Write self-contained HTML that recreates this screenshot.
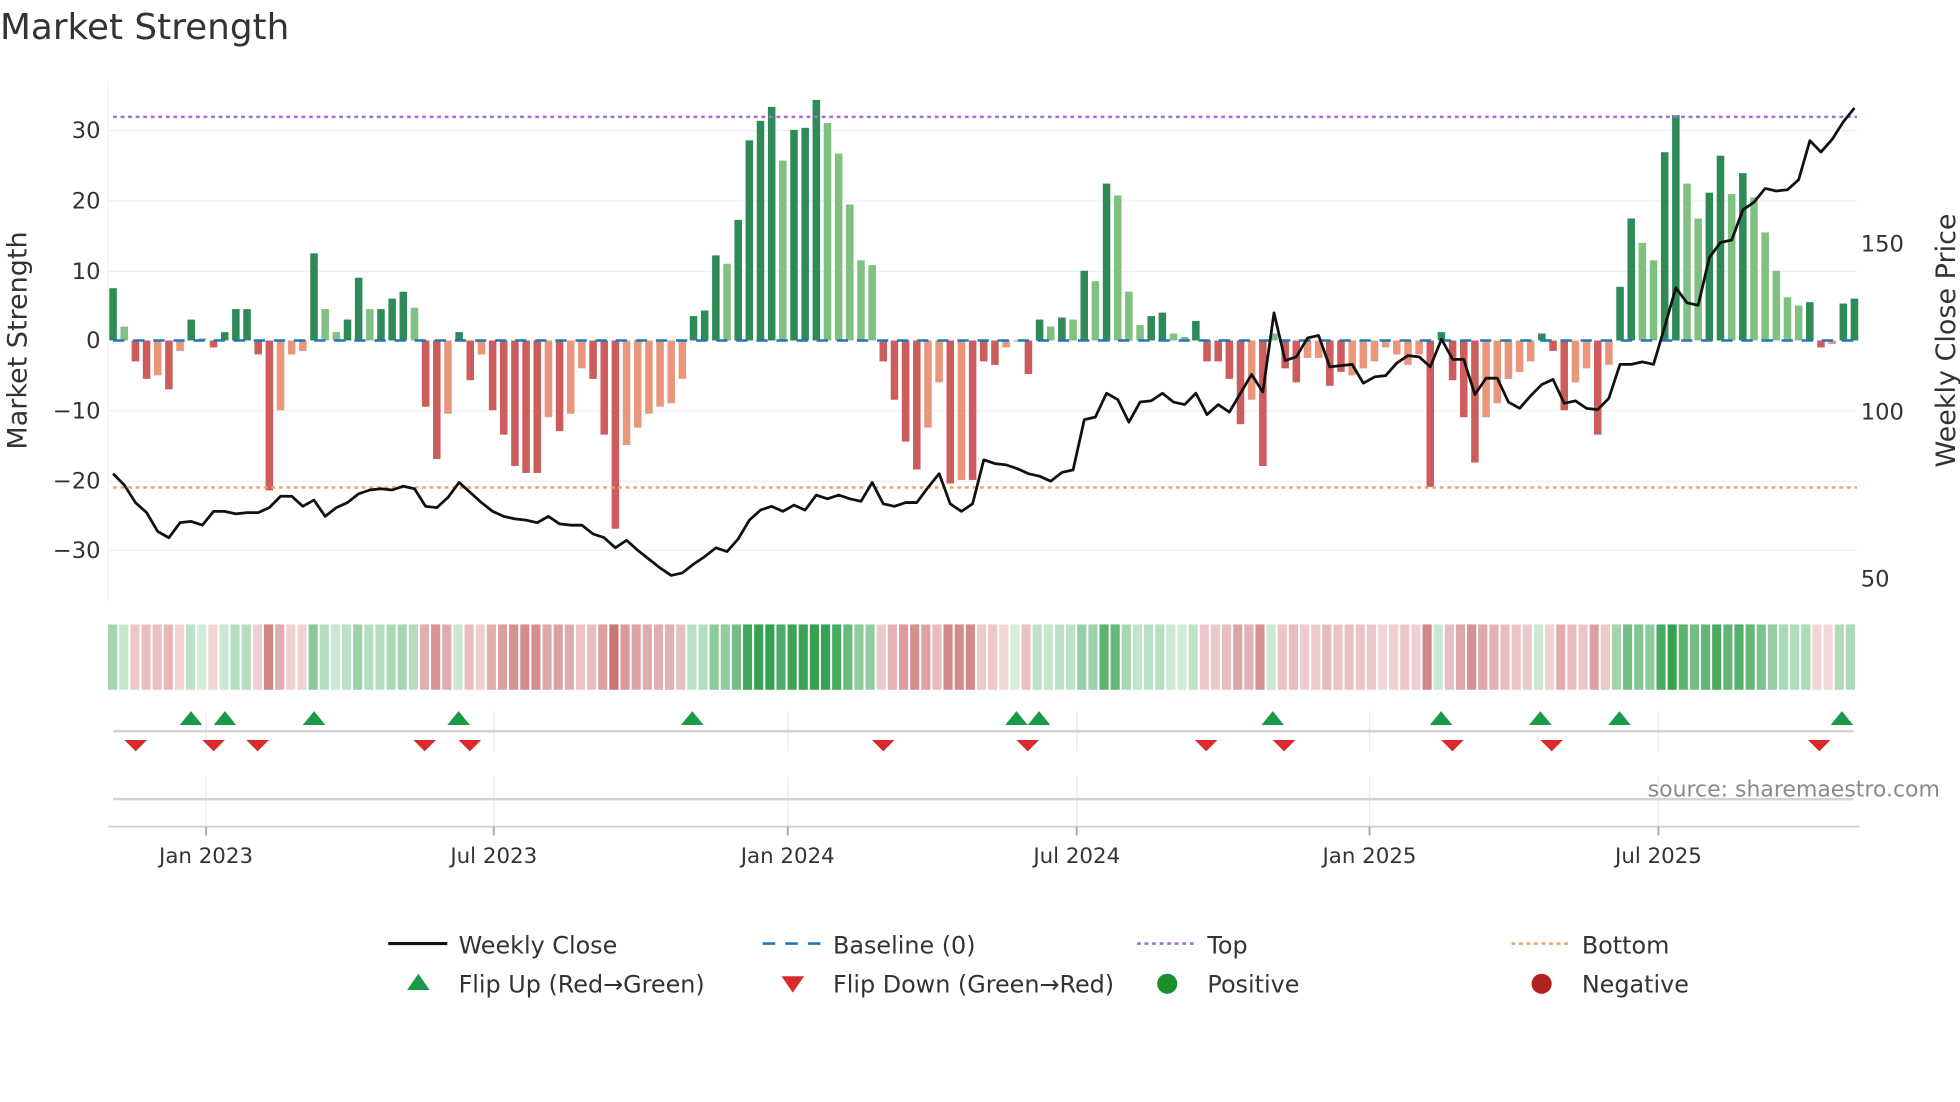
<!DOCTYPE html>
<html><head><meta charset="utf-8"><style>
html,body{margin:0;padding:0;background:#fff;width:1960px;height:1102px;overflow:hidden}
svg{display:block}
text{font-family:"DejaVu Sans","Liberation Sans",sans-serif}
</style></head><body>
<svg id="s" width="1960" height="1102" viewBox="0 0 1560 877.1" xmlns="http://www.w3.org/2000/svg">
<rect width="1560" height="878" fill="#fff"/>
<text x="0" y="31" font-size="28.5" fill="#333">Market Strength</text>
<g id="grid" stroke="#eef0f4" stroke-width="1"></g>
<line x1="86" y1="65" x2="86" y2="478" stroke="#eceef2"/>
<g id="bars"></g>
<line x1="90" y1="271" x2="1478" y2="271" stroke="#1f77b4" stroke-width="2" stroke-dasharray="9,7"/>
<line x1="90" y1="93" x2="1478" y2="93" stroke="#a66cdc" stroke-width="2" stroke-dasharray="3,3"/>
<line x1="90" y1="388" x2="1478" y2="388" stroke="#f2a36a" stroke-width="2" stroke-dasharray="3,3"/>
<polyline id="price" fill="none" stroke="#111" stroke-width="2.2" stroke-linejoin="round"/>
<g font-size="18" fill="#333" text-anchor="end">
<text x="80" y="110">30</text><text x="80" y="166">20</text><text x="80" y="222">10</text><text x="80" y="277">0</text>
<text x="80" y="333">−10</text><text x="80" y="389">−20</text><text x="80" y="444">−30</text>
</g>
<g font-size="18" fill="#333">
<text x="1481" y="200">150</text><text x="1481" y="334">100</text><text x="1481" y="467">50</text>
</g>
<text transform="translate(21,271) rotate(-90)" font-size="21.5" fill="#333" text-anchor="middle">Market Strength</text>
<text transform="translate(1556,271) rotate(-90)" font-size="21.5" fill="#333" text-anchor="middle">Weekly Close Price</text>
<g id="heat"></g>
<g stroke="#e8eaee">
<line x1="164" y1="566" x2="164" y2="598"/><line x1="393" y1="566" x2="393" y2="598"/><line x1="627" y1="566" x2="627" y2="598"/><line x1="857" y1="566" x2="857" y2="598"/><line x1="1090" y1="566" x2="1090" y2="598"/><line x1="1320" y1="566" x2="1320" y2="598"/>
<line x1="164" y1="618" x2="164" y2="658"/><line x1="393" y1="618" x2="393" y2="658"/><line x1="627" y1="618" x2="627" y2="658"/><line x1="857" y1="618" x2="857" y2="658"/><line x1="1090" y1="618" x2="1090" y2="658"/><line x1="1320" y1="618" x2="1320" y2="658"/>
</g>
<line x1="90" y1="582" x2="1475" y2="582" stroke="#d3d3d3" stroke-width="2"/>
<g id="flips"></g>
<line x1="90" y1="636" x2="1475" y2="636" stroke="#d3d3d3" stroke-width="2"/>
<line x1="86" y1="658" x2="1480" y2="658" stroke="#d3d3d3" stroke-width="1.5"/>
<g stroke="#aaa" stroke-width="1.5"><line x1="164" y1="658" x2="164" y2="665"/><line x1="393" y1="658" x2="393" y2="665"/><line x1="627" y1="658" x2="627" y2="665"/><line x1="857" y1="658" x2="857" y2="665"/><line x1="1090" y1="658" x2="1090" y2="665"/><line x1="1320" y1="658" x2="1320" y2="665"/></g>
<text x="1544" y="634" font-size="17.5" fill="#8a8a8a" text-anchor="end">source: sharemaestro.com</text>
<g font-size="17" fill="#333" text-anchor="middle">
<text x="164" y="687">Jan 2023</text><text x="393" y="687">Jul 2023</text><text x="627" y="687">Jan 2024</text><text x="857" y="687">Jul 2024</text><text x="1090" y="687">Jan 2025</text><text x="1320" y="687">Jul 2025</text>
</g>
<g font-size="19" fill="#333">
<line x1="309" y1="751" x2="356" y2="751" stroke="#111" stroke-width="2.5"/><text x="365" y="759">Weekly Close</text>
<line x1="607" y1="751" x2="654" y2="751" stroke="#1f77b4" stroke-width="2" stroke-dasharray="10,8"/><text x="663" y="759">Baseline (0)</text>
<line x1="905" y1="751" x2="952" y2="751" stroke="#a66cdc" stroke-width="2" stroke-dasharray="3,3"/><text x="961" y="759">Top</text>
<line x1="1203" y1="751" x2="1250" y2="751" stroke="#f2a36a" stroke-width="2" stroke-dasharray="3,3"/><text x="1259" y="759">Bottom</text>
<polygon points="333,775 342,788 324,788" fill="#1a9a48"/><text x="365" y="790">Flip Up (Red→Green)</text>
<polygon points="622,777 640,777 631,790" fill="#d92b2b"/><text x="663" y="790">Flip Down (Green→Red)</text>
<circle cx="929" cy="783" r="8" fill="#1a8f2e"/><text x="961" y="790">Positive</text>
<circle cx="1227" cy="783" r="8" fill="#b22222"/><text x="1259" y="790">Negative</text>
</g>
</svg>
<script>
var NS="http://www.w3.org/2000/svg";
function el(t,a,p){var e=document.createElementNS(NS,t);for(var k in a)e.setAttribute(k,a[k]);document.getElementById(p).appendChild(e);return e;}
[104,160,216,327,383,438].forEach(function(y){el("line",{x1:86,x2:1478,y1:y,y2:y},"grid");});
var V=[[7.5,1],[2,0],[-3,1],[-5.5,1],[-5,0],[-7,1],[-1.5,0],[3,1],[0.3,0],[-1,1],[1.2,1],[4.5,1],[4.5,1],[-2,1],[-21.5,1],[-10,0],[-2,0],[-1.5,0],[12.5,1],[4.5,0],[1.2,0],[3,1],[9,1],[4.5,0],[4.5,1],[6,1],[7,1],[4.7,0],[-9.5,1],[-17,1],[-10.5,0],[1.2,1],[-5.7,1],[-2,0],[-10,1],[-13.5,1],[-18,1],[-19,1],[-19,1],[-11,0],[-13,1],[-10.5,0],[-4,0],[-5.5,1],[-13.5,1],[-27,1],[-15,0],[-12.5,0],[-10.5,0],[-9.5,0],[-9,0],[-5.5,0],[3.5,1],[4.3,1],[12.2,1],[11,0],[17.3,1],[28.7,1],[31.5,1],[33.5,1],[25.8,0],[30.2,1],[30.5,1],[34.5,1],[31.2,0],[26.8,0],[19.5,0],[11.5,0],[10.8,0],[-3,1],[-8.5,1],[-14.5,1],[-18.5,1],[-12.5,0],[-6,0],[-20.5,1],[-20,0],[-20,1],[-3,1],[-3.5,1],[-1,0],[0,0],[-4.8,1],[3,1],[2,0],[3.3,1],[3,0],[10,1],[8.5,0],[22.5,1],[20.8,0],[7,0],[2.2,0],[3.5,1],[4,1],[1,0],[0.5,0],[2.8,1],[-3,1],[-3,1],[-5.5,1],[-12,1],[-8.5,0],[-18,1],[1,0],[-4,1],[-6,1],[-2.5,0],[-2.5,0],[-6.5,1],[-4.5,1],[-5,0],[-4,0],[-3,0],[-1,0],[-2,0],[-3.5,0],[-2,0],[-21,1],[1.2,1],[-5.7,1],[-11,1],[-17.5,1],[-11,0],[-9,0],[-5.5,0],[-4.5,0],[-3,0],[1,1],[-1.5,1],[-10,1],[-6,0],[-4,0],[-13.5,1],[-3.5,0],[7.7,1],[17.5,1],[14,0],[11.5,0],[27,1],[32.3,1],[22.5,0],[17.5,0],[21.2,1],[26.5,1],[21,0],[24,1],[20.5,0],[15.5,0],[10,0],[6.2,0],[5,0],[5.5,1],[-1,1],[-0.5,0],[5.3,1],[6,1]];
var n=V.length,x0=90,dx=(1476-90)/(n-1);
function mix(a,b,t){return "rgb("+a.map(function(v,i){return Math.round(v+(b[i]-v)*t)}).join(",")+")";}
V.forEach(function(d,i){var v=d[0],x=x0+i*dx,y=271-v*5.55;
 var c=v>=0?(d[1]?"#2e8b57":"#80c080"):(d[1]?"#cd5c5c":"#e9967a");
 el("rect",{x:x-3,y:Math.min(y,271),width:6,height:Math.max(Math.abs(v*5.55),0.8),fill:c},"bars");
 var t=Math.min(Math.abs(v)/32,1);
 var hc=v>=0?mix([214,238,218],[52,160,80],Math.pow(t,0.8)):mix([244,220,220],[195,100,100],Math.pow(t,0.8));
 el("rect",{x:86+i*(1392/n),y:497,width:1392/n-1.6,height:52,fill:hc},"heat");
});
var P=[377,386,400,408,423,428,416,415,418,407,407,409,408,408,404,395,395,403,398,411,404,400,393,390,389,390,387,389,403,404,396,384,392,400,407,411,413,414,416,411,417,418,418,425,428,436,430,438,445,452,458,456,449,443,436,439,429,414,406,403,407,402,406,394,397,394,397,399,384,401,403,400,400,388,377,401,407,401,366,369,370,373,377,379,383,376,374,334,332,313,318,336,320,319,313,320,322,313,330,322,328,313,298,312,249,287,284,269,267,292,291,290,305,300,299,289,283,284,292,270,286,286,314,301,301,320,325,315,306,302,321,319,325,326,317,290,290,288,290,260,229,241,243,205,193,191,167,161,150,152,151,143,112,121,111,97,86];
var m=P.length,px=(1476-90)/(m-1);
document.getElementById("price").setAttribute("points",P.map(function(y,i){return (90+i*px).toFixed(1)+","+y}).join(" "));
[152,179,250,365,551,809,827,1013,1147,1226,1289,1466].forEach(function(x){el("polygon",{points:(x)+",566 "+(x+9)+",577 "+(x-9)+",577",fill:"#1a9a48"},"flips");});
[108,170,205,338,374,703,818,960,1022,1156,1235,1448].forEach(function(x){el("polygon",{points:(x-9)+",589 "+(x+9)+",589 "+x+",598",fill:"#d92b2b"},"flips");});
</script>
</body></html>
